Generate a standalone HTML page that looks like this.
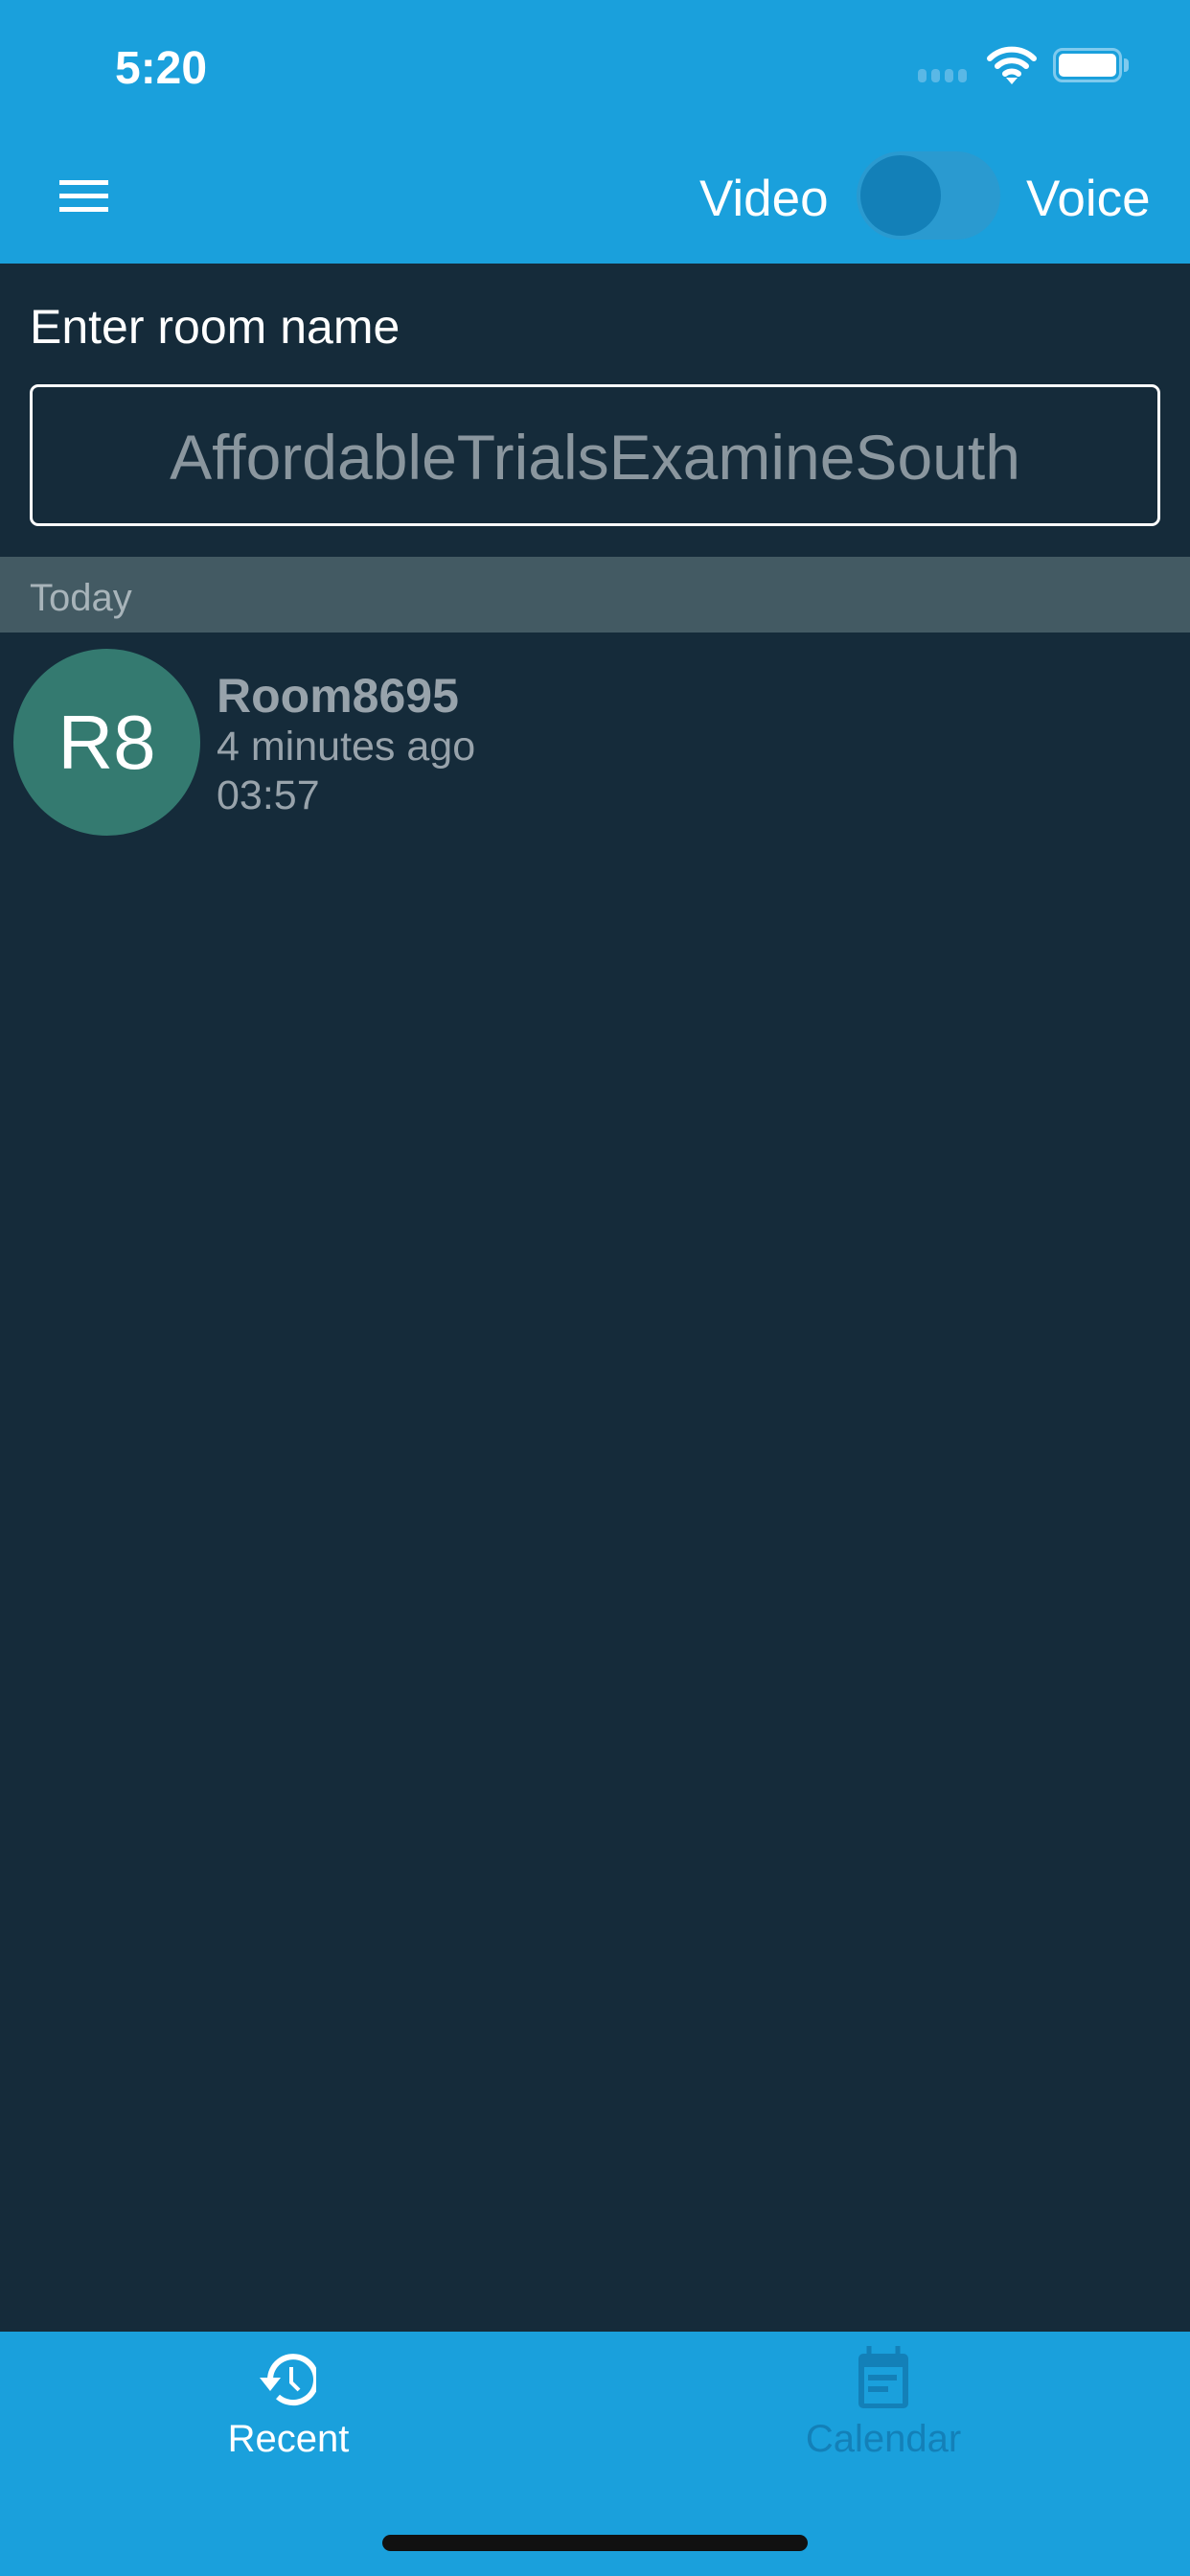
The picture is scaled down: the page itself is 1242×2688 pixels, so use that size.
<!DOCTYPE html>
<html><head><meta charset="utf-8"><style>
*{margin:0;padding:0;box-sizing:border-box}
body{width:1242px;height:2688px;background:#152b3a;font-family:"Liberation Sans",sans-serif;position:relative;overflow:hidden}
.a{position:absolute;white-space:nowrap}
</style></head><body>
<div class="a" style="left:0;top:0;width:1242px;height:275px;background:#1aa0dc"></div>
<div class="a" style="left:120px;top:44px;font-size:48px;font-weight:bold;color:#fff">5:20</div>
<div class="a" style="left:958px;top:72px;width:52px;height:14px">
<span class="a" style="left:0;width:9px;height:14px;border-radius:4px;background:#5ab8e6"></span>
<span class="a" style="left:14px;width:9px;height:14px;border-radius:4px;background:#5ab8e6"></span>
<span class="a" style="left:28px;width:9px;height:14px;border-radius:4px;background:#5ab8e6"></span>
<span class="a" style="left:42px;width:9px;height:14px;border-radius:4px;background:#5ab8e6"></span></div>
<svg class="a" style="left:1030px;top:46px" width="52" height="42" viewBox="0 0 52 42"><path d="M3 15a33 33 0 0 1 46 0M11 23a22 22 0 0 1 30 0M19 31a11 11 0 0 1 14 0" stroke="#fff" stroke-width="6" fill="none" stroke-linecap="round"/><path d="M26 42l-6-7h12z" fill="#fff"/></svg>
<div class="a" style="left:1099px;top:50px;width:72px;height:36px;border:3px solid #7fcaee;border-radius:10px;padding:3px"><div style="width:100%;height:100%;background:#fff;border-radius:5px"></div></div>
<div class="a" style="left:1173px;top:61px;width:5px;height:14px;background:#7fcaee;border-radius:0 4px 4px 0"></div>
<div class="a" style="left:62px;top:188px;width:51px;height:5px;background:#fff"></div>
<div class="a" style="left:62px;top:202px;width:51px;height:5px;background:#fff"></div>
<div class="a" style="left:62px;top:216px;width:51px;height:5px;background:#fff"></div>
<div class="a" style="left:730px;top:177px;font-size:53px;color:#fff">Video</div>
<div class="a" style="left:894px;top:158px;width:150px;height:92px;border-radius:46px;background:#2a9ad0"></div>
<div class="a" style="left:898px;top:162px;width:84px;height:84px;border-radius:50%;background:#1380b8"></div>
<div class="a" style="left:1071px;top:177px;font-size:53px;color:#fff">Voice</div>
<div class="a" style="left:31px;top:312px;font-size:50px;color:#fff">Enter room name</div>
<div class="a" style="left:31px;top:401px;width:1180px;height:148px;border:3px solid #fff;border-radius:9px;text-align:center;line-height:146px;font-size:66px;color:#8a969e">AffordableTrialsExamineSouth</div>
<div class="a" style="left:0;top:581px;width:1242px;height:79px;background:#435a63"></div>
<div class="a" style="left:31px;top:602px;font-size:40px;color:#a8b4ba">Today</div>
<div class="a" style="left:14px;top:677px;width:195px;height:195px;border-radius:50%;background:#347a70;color:#fff;font-size:80px;font-weight:300;text-align:center;line-height:195px">R8</div>
<div class="a" style="left:226px;top:697px;font-size:50px;font-weight:bold;color:#98a3ab">Room8695</div>
<div class="a" style="left:226px;top:755px;font-size:43px;color:#98a3ab">4 minutes ago</div>
<div class="a" style="left:226px;top:806px;font-size:43px;color:#98a3ab">03:57</div>
<div class="a" style="left:0;top:2433px;width:1242px;height:255px;background:#1aa0dc"></div>
<svg class="a" style="left:260px;top:2452px" width="70" height="62" viewBox="0 0 70 62"><path d="M22 31A24 24 0 1 1 30 49" stroke="#fff" stroke-width="6" fill="none"/><path d="M11 29h22l-11 14z" fill="#fff"/><path d="M44 18v16l8 8" stroke="#fff" stroke-width="4" fill="none"/></svg>
<div class="a" style="left:201px;top:2523px;width:200px;text-align:center;font-size:40px;color:#fff">Recent</div>
<svg class="a" style="left:893px;top:2448px" width="58" height="68" viewBox="0 0 58 68"><path d="M14 0v10M44 0v10" stroke="#1380b8" stroke-width="5"/><rect x="3" y="8" width="52" height="57" rx="5" fill="#1380b8"/><rect x="9" y="22" width="40" height="38" fill="#1aa0dc"/><rect x="13" y="30" width="30" height="6" fill="#1380b8"/><rect x="13" y="42" width="21" height="6" fill="#1380b8"/></svg>
<div class="a" style="left:772px;top:2523px;width:300px;text-align:center;font-size:40px;color:#1380b8">Calendar</div>
<div class="a" style="left:399px;top:2645px;width:444px;height:17px;border-radius:9px;background:#111"></div>
</body></html>
